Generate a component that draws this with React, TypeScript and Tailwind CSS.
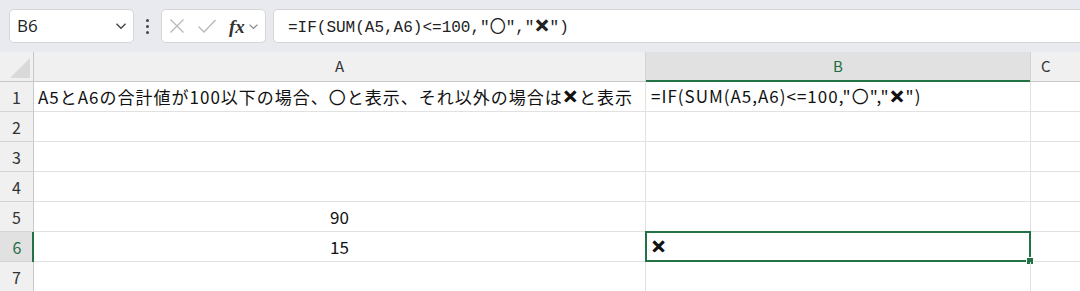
import React from "react";

const cellFont = { fontFamily: '"Noto Sans CJK JP", "Noto Sans", sans-serif' };

const rows = [1, 2, 3, 4, 5, 6, 7];

const Chevron = ({ className }: { className?: string }) => (
  <svg viewBox="0 0 12 8" className={className} fill="none" stroke="currentColor" strokeWidth="1.4">
    <path d="M1.5 1.8 L6 6.2 L10.5 1.8" />
  </svg>
);

// heavy cross as it shows in the sheet
const Batsu = () => (
  <span className="text-[18px] [-webkit-text-stroke:1.3px_currentColor]" style={{ fontFamily: '"DejaVu Sans", sans-serif' }}>
    ✕
  </span>
);

const Toolbar = () => (
  <div className="flex h-[52px] items-center gap-[7px] bg-[#e9eaef] pl-[9px]">
    <div className="flex h-[34px] w-[125px] items-center justify-between rounded-[5px] border border-[#d6d6d6] bg-white pl-[7px] pr-[6px]">
      <span className="text-[17px] text-[#222]" style={{ fontFamily: '"Open Sans", sans-serif' }}>B6</span>
      <Chevron className="h-[8px] w-[12px] text-[#444]" />
    </div>
    <div className="flex w-[13px] flex-col items-center gap-[3px]">
      <span className="h-[3px] w-[3px] rounded-full bg-[#444]" />
      <span className="h-[3px] w-[3px] rounded-full bg-[#444]" />
      <span className="h-[3px] w-[3px] rounded-full bg-[#444]" />
    </div>
    <div className="flex h-[34px] w-[105px] items-center rounded-[5px] border border-[#d6d6d6] bg-white pl-[7px]">
      <svg viewBox="0 0 16 16" className="h-[16px] w-[16px] text-[#b8b8b8]" fill="none" stroke="currentColor" strokeWidth="1.3">
        <path d="M1.5 1.5 L14.5 14.5 M14.5 1.5 L1.5 14.5" />
      </svg>
      <svg viewBox="0 0 20 16" className="ml-[12px] h-[16px] w-[20px] text-[#b8b8b8]" fill="none" stroke="currentColor" strokeWidth="1.3">
        <path d="M1.5 8.5 L7 14 L18.5 2" />
      </svg>
      <span className="ml-[12px] text-[19px] italic font-bold leading-none text-[#333]" style={{ fontFamily: '"Liberation Serif", serif' }}>fx</span>
      <Chevron className="ml-[3px] h-[7px] w-[11px] text-[#888]" />
    </div>
    <div className="flex h-[34px] flex-1 items-center rounded-l-[5px] border border-r-0 border-[#d6d6d6] bg-white pl-[14px]">
      <span className="text-[16px] text-[#222]" style={{ fontFamily: '"Liberation Mono", "Noto Sans CJK JP", monospace' }}>
        =IF(SUM(A5,A6)&lt;=100,"〇","<Batsu />")
      </span>
    </div>
  </div>
);

const HeaderRow = () => (
  <div className="grid h-[30px] grid-cols-[34px_612px_385px_1fr] border-b border-[#c8c8c8] text-[15px]" style={cellFont}>
    <div className="relative border-r border-[#c8c8c8] bg-[#f0f0f0]">
      <svg viewBox="0 0 20 20" className="absolute bottom-[3px] right-[3px] h-[20px] w-[20px]">
        <path d="M20 0 L20 20 L0 20 Z" fill="#d9d9d9" />
      </svg>
    </div>
    <div className="flex items-center justify-center border-r border-[#d4d4d4] bg-[#f0f0f0] text-[#333]">A</div>
    <div className="relative flex items-center justify-center border-r border-[#d4d4d4] bg-[#e1e1e1] text-[#1e6e42]">
      B
      <span className="absolute bottom-[-1px] left-0 right-0 h-[2px] bg-[#217346]" />
    </div>
    <div className="flex items-center bg-[#f0f0f0] pl-[10px] text-[#333]">C</div>
  </div>
);

const cellText: Record<string, React.ReactNode> = {
  "1A": <>A5とA6の合計値が100以下の場合、〇と表示、それ以外の場合は<Batsu />と表示</>,
  "1B": <span className="tracking-[1px]">=IF(SUM(A5,A6)&lt;=100,"〇","<Batsu />")</span>,
  "5A": "90",
  "6A": "15",
  "6B": <Batsu />,
};

export default function App() {
  return (
    <div className="h-[291px] w-[1080px] overflow-hidden bg-white">
      <Toolbar />
      <HeaderRow />
      {rows.map((r) => {
        const sel = r === 6;
        return (
          <div key={r} className="grid h-[30px] grid-cols-[34px_612px_385px_1fr] text-[17px] text-[#111]" style={cellFont}>
            <div
              className={
                sel
                  ? "relative flex items-center justify-center border-b border-[#d4d4d4] bg-[#e1e1e1] text-[16px] text-[#1e6e42]"
                  : "flex items-center justify-center border-b border-r border-[#d4d4d4] border-r-[#c8c8c8] bg-[#f0f0f0] text-[16px] text-[#333]"
              }
            >
              {r}
              {sel && <span className="absolute bottom-[-1px] right-0 top-0 w-[2px] bg-[#217346]" />}
            </div>
            <div
              className={
                r === 1
                  ? "flex items-center overflow-hidden whitespace-nowrap border-b border-r border-[#e1e1e1] pl-[4px] tracking-[1px]"
                  : "flex items-center justify-center border-b border-r border-[#e1e1e1]"
              }
            >
              {cellText[`${r}A`]}
            </div>
            <div className="relative flex items-center whitespace-nowrap border-b border-r border-[#e1e1e1] pl-[5px]">
              {cellText[`${r}B`]}
              {sel && (
                <>
                  <span className="absolute -left-[1px] -top-[1px] bottom-[-1px] right-[-1px] border-2 border-[#217346]" />
                  <span className="absolute -bottom-[3px] -right-[3px] h-[6px] w-[6px] bg-[#217346] outline outline-1 outline-white" />
                </>
              )}
            </div>
            <div className="border-b border-[#e1e1e1]" />
          </div>
        );
      })}
    </div>
  );
}
